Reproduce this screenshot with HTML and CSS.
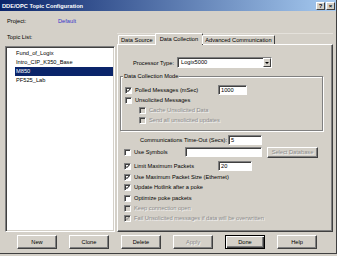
FILE: index.html
```html
<!DOCTYPE html>
<html lang="en">
<head>
    <meta charset="UTF-8">
    <title>DDE/OPC Topic Configuration</title>
    <link rel="stylesheet" href="styles.css">
</head>
<body>
    <div class="window">
        <div class="titlebar">
            <span class="title">DDE/OPC Topic Configuration</span>
            <div class="caption-buttons">
                <span class="cap-btn">?</span>
                <span class="cap-btn">×</span>
            </div>
        </div>

        <div class="project-row">
            <span class="project-label">Project:</span>
            <span class="project-name">Default</span>
        </div>

        <div class="main">
            <div class="topics">
                <div class="topics-label">Topic List:</div>
                <ul class="topic-list">
                    <li>Fund_of_Logix</li>
                    <li>Intro_CIP_K350_Base</li>
                    <li class="selected">M850</li>
                    <li>PF525_Lab</li>
                </ul>
            </div>

            <div class="tabs-area">
                <div class="tab-strip">
                    <span class="tab">Data Source</span>
                    <span class="tab active">Data Collection</span>
                    <span class="tab">Advanced Communication</span>
                </div>

                <div class="tab-panel">
                    <div class="proc-row">
                        <span class="proc-label">Processor Type:</span>
                        <div class="combo">
                            <span class="combo-text">Logix5000</span>
                            <span class="combo-arrow"><span class="arrow"></span></span>
                        </div>
                    </div>

                    <div class="group">
                        <span class="group-label">Data Collection Mode</span>
                        <div class="check-row">
                            <span class="box"><svg viewBox="0 0 7 7"><polyline points="1,3.2 2.7,5 6,1.4"/></svg></span>
                            <span class="label-polled">Polled Messages (mSec)</span>
                            <span class="field w-1000">1000</span>
                        </div>
                        <div class="check-row">
                            <span class="box"></span>
                            <span>Unsolicited Messages</span>
                        </div>
                        <div class="check-row indent">
                            <span class="box off"></span>
                            <span class="disabled-text">Cache Unsolicited Data</span>
                        </div>
                        <div class="check-row indent">
                            <span class="box off"></span>
                            <span class="disabled-text">Send all unsolicited updates</span>
                        </div>
                    </div>

                    <div class="comm-row">
                        <span class="comm-label">Communications Time-Out (Secs):</span>
                        <span class="field w-timeout">5</span>
                    </div>

                    <div class="options">
                        <div class="check-row symbols">
                            <span class="box"></span>
                            <span class="label-symbols">Use Symbols</span>
                            <span class="field w-symbols"></span>
                            <button class="btn small" disabled>Select Database</button>
                        </div>
                        <div class="check-row limit">
                            <span class="box"><svg viewBox="0 0 7 7"><polyline points="1,3.2 2.7,5 6,1.4"/></svg></span>
                            <span class="label-limit">Limit Maximum Packets</span>
                            <span class="field w-limit">20</span>
                        </div>
                        <div class="check-row tight">
                            <span class="box"><svg viewBox="0 0 7 7"><polyline points="1,3.2 2.7,5 6,1.4"/></svg></span>
                            <span>Use Maximum Packet Size (Ethernet)</span>
                        </div>
                        <div class="check-row">
                            <span class="box"><svg viewBox="0 0 7 7"><polyline points="1,3.2 2.7,5 6,1.4"/></svg></span>
                            <span>Update Hotlink after a poke</span>
                        </div>
                        <div class="check-row tight">
                            <span class="box"></span>
                            <span>Optimize poke packets</span>
                        </div>
                        <div class="check-row">
                            <span class="box off"></span>
                            <span class="disabled-text">Keep connection open</span>
                        </div>
                        <div class="check-row">
                            <span class="box off"><svg viewBox="0 0 7 7"><polyline points="1,3.2 2.7,5 6,1.4"/></svg></span>
                            <span class="disabled-text">Fail Unsolicited messages if data will be overwritten</span>
                        </div>
                    </div>
                </div>
            </div>
        </div>

        <div class="buttons">
            <button class="btn">New</button>
            <button class="btn">Clone</button>
            <button class="btn">Delete</button>
            <button class="btn" disabled>Apply</button>
            <button class="btn default">Done</button>
            <button class="btn">Help</button>
        </div>
    </div>
</body>
</html>
```

FILE: styles.css
```css
* {
    box-sizing: border-box;
}
body {
    margin: 0;
    font-family: "Liberation Sans", Arial, sans-serif;
    font-size: 5.7px;
    background-color: #d4d0c8;
    color: #000;
}
.window {
    width: 337px;
    height: 254px;
    border-right: 1px solid #404040;
    border-bottom: 1px solid #404040;
}
.titlebar {
    height: 11px;
    display: flex;
    align-items: center;
    justify-content: space-between;
    padding: 0 1px 0 2px;
    background: linear-gradient(to right, #0a246a, #a6caf0);
    color: #fff;
    font-weight: bold;
}
.caption-buttons {
    display: flex;
    gap: 1px;
}
.cap-btn {
    width: 9px;
    height: 8px;
    background: #d4d0c8;
    border: 1px solid;
    border-color: #fff #404040 #404040 #fff;
    color: #000;
    font-size: 6px;
    line-height: 6px;
    text-align: center;
}
.project-row {
    height: 10px;
    margin-top: 5px;
    padding-left: 7px;
    display: flex;
    align-items: center;
}
.project-label {
    width: 51px;
}
.project-name {
    color: #3535c8;
}
.main {
    display: flex;
    height: 199px;
    margin-top: 7px;
}
.topics {
    width: 110px;
    margin-left: 5px;
}
.topics-label {
    height: 9px;
    line-height: 9px;
    padding-left: 2px;
    margin-bottom: 4px;
}
.topic-list {
    list-style: none;
    margin: 0;
    padding: 2px 1px 0 0;
    height: 186px;
    background: #fff;
    border: 1px solid;
    border-color: #808080 #fff #fff #808080;
    box-shadow: inset 1px 1px #404040, inset -1px -1px #d4d0c8;
}
.topic-list li {
    height: 9px;
    line-height: 9px;
    margin-left: 9px;
    padding-left: 1px;
}
.topic-list li.selected {
    background: #0a246a;
    color: #fff;
}
.tabs-area {
    width: 216px;
    margin-left: 2px;
}
.tab-strip {
    position: relative;
    z-index: 1;
    height: 11px;
    display: flex;
    align-items: flex-end;
    padding-left: 1px;
    border-top: 1px solid #e4e1db;
}
.tab {
    height: 9px;
    line-height: 8px;
    padding: 0 2px;
    border: 1px solid;
    border-bottom: none;
    border-color: #fff #404040 transparent #fff;
    border-radius: 1px 1px 0 0;
    background: #d4d0c8;
}
.tab.active {
    height: 12px;
    line-height: 10px;
    margin: 0 -1px -1px -1px;
    padding: 0 4px;
}
.tab-panel {
    height: 188px;
    padding-top: 12px;
    border: 1px solid;
    border-color: #fff #404040 #404040 #fff;
    box-shadow: inset -1px -1px #808080;
}
.proc-row {
    display: flex;
    align-items: center;
    height: 11px;
}
.proc-label {
    width: 56px;
    margin-right: 3px;
    text-align: right;
}
.combo {
    width: 95px;
    height: 11px;
    display: flex;
    background: #fff;
    border: 1px solid;
    border-color: #808080 #fff #fff #808080;
    box-shadow: inset 1px 1px #404040;
}
.combo-text {
    flex: 1;
    padding-left: 3px;
    line-height: 9px;
}
.combo-arrow {
    width: 8px;
    height: 9px;
    display: flex;
    align-items: center;
    justify-content: center;
    background: #d4d0c8;
    border: 1px solid;
    border-color: #fff #404040 #404040 #fff;
}
.arrow {
    border-left: 2px solid transparent;
    border-right: 2px solid transparent;
    border-top: 2px solid #000;
}
.group {
    position: relative;
    width: 203px;
    height: 55px;
    margin: 8px 0 0 2px;
    padding: 8px 0 0 4px;
    border: 1px solid #808080;
    box-shadow: inset 1px 1px #fff, 1px 1px #fff;
}
.group-label {
    position: absolute;
    top: -5px;
    left: 2px;
    padding: 0 1px;
    line-height: 8px;
    background: #d4d0c8;
}
.check-row {
    display: flex;
    align-items: center;
    height: 10px;
    white-space: nowrap;
}
.check-row.indent {
    padding-left: 14px;
}
.box {
    width: 7px;
    height: 7px;
    flex-shrink: 0;
    margin-right: 3px;
    background: #fff;
    border: 1px solid;
    border-color: #808080 #fff #fff #808080;
    box-shadow: inset 1px 1px #404040;
}
.box svg {
    display: block;
    width: 5px;
    height: 5px;
    fill: none;
    stroke: #000;
    stroke-width: 1.4;
}
.box.off {
    background: #d4d0c8;
}
.box.off svg {
    stroke: #808080;
}
.disabled-text {
    color: #8c8c8c;
    text-shadow: 1px 1px #f4f4f4;
}
.field {
    height: 10px;
    padding-left: 2px;
    line-height: 8px;
    background: #fff;
    border: 1px solid;
    border-color: #808080 #fff #fff #808080;
    box-shadow: inset 1px 1px #404040;
}
.label-polled {
    width: 83px;
}
.w-1000 {
    width: 29px;
}
.comm-row {
    display: flex;
    align-items: center;
    height: 10px;
    margin-top: 4px;
}
.comm-label {
    width: 109px;
    margin-right: 1px;
    text-align: right;
}
.w-timeout {
    width: 34px;
}
.options {
    padding-left: 6px;
}
.check-row.symbols {
    margin-top: 2px;
}
.label-symbols {
    width: 51px;
}
.w-symbols {
    width: 77px;
}
.check-row.limit {
    margin-top: 4px;
}
.label-limit {
    width: 84px;
}
.w-limit {
    width: 34px;
}
.check-row.tight {
    margin-top: 1px;
}
.buttons {
    display: flex;
    gap: 12px;
    margin-top: 3px;
    padding-left: 17px;
}
.btn {
    width: 40px;
    height: 14px;
    padding: 0;
    font: inherit;
    color: #000;
    background: #d4d0c8;
    border: 1px solid;
    border-color: #fff #404040 #404040 #fff;
    box-shadow: inset -1px -1px #808080;
}
.btn:disabled {
    color: #8c8c8c;
    text-shadow: 1px 1px #f4f4f4;
}
.btn.default {
    border-color: #000;
    box-shadow: inset 1px 1px #fff, inset -1px -1px #404040, inset -2px -2px #808080;
}
.btn.small {
    width: 51px;
    height: 11px;
    margin-left: 5px;
}
```
